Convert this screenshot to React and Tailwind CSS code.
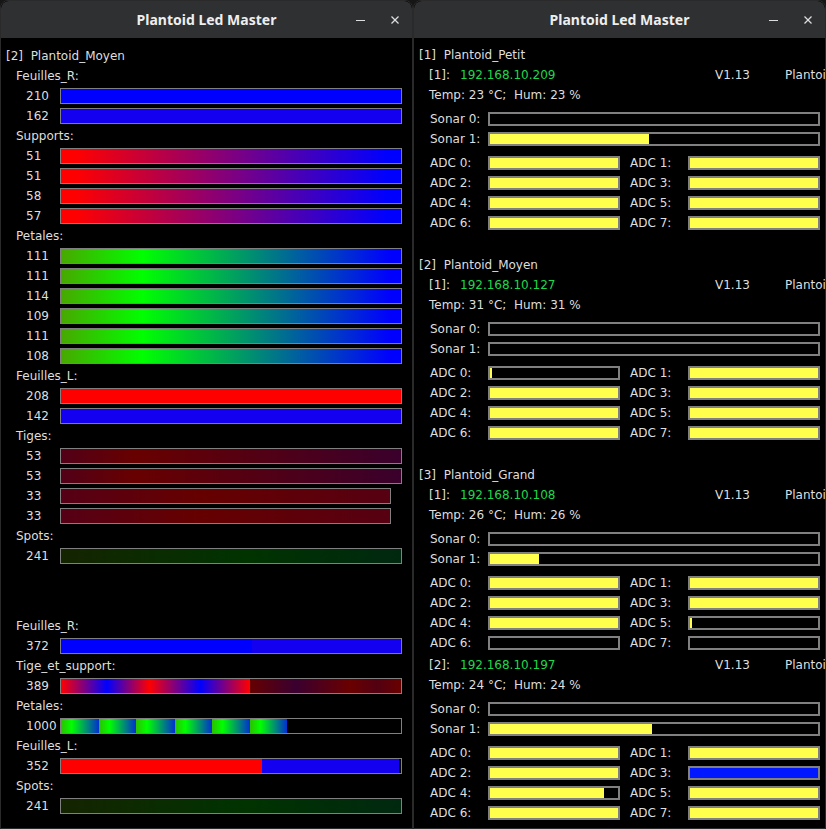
import React from "react";

const TitleBar = () => (
  <div className="relative h-[37px] shrink-0 bg-[#2e3032] rounded-t-[8px] flex items-center justify-center">
    <span className="font-['Noto_Sans',sans-serif] font-bold text-[14px] text-[#eeeeee]">Plantoid Led Master</span>
    <svg className="absolute left-[355px] top-[15px]" width="9" height="9" viewBox="0 0 9 9">
      <line x1="0" y1="4.5" x2="9" y2="4.5" stroke="#dddddd" strokeWidth="1" />
    </svg>
    <svg className="absolute left-[390px] top-[15px]" width="8" height="8" viewBox="0 0 8 8">
      <line x1="0.5" y1="0.5" x2="7.5" y2="7.5" stroke="#dddddd" strokeWidth="1.2" />
      <line x1="7.5" y1="0.5" x2="0.5" y2="7.5" stroke="#dddddd" strokeWidth="1.2" />
    </svg>
  </div>
);

const Label = ({ children }) => (
  <div className="h-[20px] flex items-center pl-[10px]">{children}</div>
);

const LRow = ({ n, w = "w-[342px]", bg = "", children }) => (
  <div className="h-[20px] flex items-center">
    <span className="ml-[20px] w-[34px] whitespace-nowrap">{n}</span>
    <div className={`h-[16px] border border-[#808080] bg-black flex overflow-hidden ${w}`}>
      <div className={`h-full w-full flex ${bg}`}>{children}</div>
    </div>
  </div>
);

const SUP = "bg-[linear-gradient(to_right,#ff0000_4%,#0000ff_96%)]";
const PET = "bg-[linear-gradient(to_right,#48a800_0%,#00ff00_24%,#0000ff_97%)]";
const TIG1 = "bg-[linear-gradient(to_right,#520018_0%,#680000_22%,#3a002c_100%)]";
const TIG2 = "bg-[linear-gradient(to_right,#560016_0%,#660000_42%,#560012_100%)]";
const SPOT = "bg-[linear-gradient(to_right,#142400_0%,#003300_55%,#002810_100%)]";
const SEG = "bg-[linear-gradient(to_right,#2cc000_0%,#00ff00_28%,#0030d0_100%)]";

const LeftWindow = () => (
  <div className="w-[413px] h-[829px] shrink-0 flex flex-col bg-black border border-[#2a2a2a] rounded-t-[8px] overflow-hidden">
    <TitleBar />
    <div className="pt-[8px] pl-[5px] text-[#dedede]">
      <div className="h-[20px] flex items-center whitespace-pre">[2]  Plantoid_Moyen</div>
      <Label>Feuilles_R:</Label>
      <LRow n="210" bg="bg-[#0000ff]" />
      <LRow n="162" bg="bg-[#1400f0]" />
      <Label>Supports:</Label>
      <LRow n="51" bg={SUP} />
      <LRow n="51" bg={SUP} />
      <LRow n="58" bg={SUP} />
      <LRow n="57" bg={SUP} />
      <Label>Petales:</Label>
      <LRow n="111" bg={PET} />
      <LRow n="111" bg={PET} />
      <LRow n="114" bg={PET} />
      <LRow n="109" bg={PET} />
      <LRow n="111" bg={PET} />
      <LRow n="108" bg={PET} />
      <Label>Feuilles_L:</Label>
      <LRow n="208" bg="bg-[#ff0000]" />
      <LRow n="142" bg="bg-[#1400f0]" />
      <Label>Tiges:</Label>
      <LRow n="53" bg={TIG1} />
      <LRow n="53" bg={TIG1} />
      <LRow n="33" w="w-[331px]" bg={TIG2} />
      <LRow n="33" w="w-[331px]" bg={TIG2} />
      <Label>Spots:</Label>
      <LRow n="241" bg={SPOT} />
      <div className="h-[50px]" />
      <Label>Feuilles_R:</Label>
      <LRow n="372">
        <div className="h-full w-[191px] bg-[#0000ff]" />
        <div className="h-full flex-1 bg-[#1400f0]" />
      </LRow>
      <Label>Tige_et_support:</Label>
      <LRow
        n="389"
        bg="bg-[linear-gradient(to_right,#ff0000_0%,#0000ff_13.5%,#ff0000_26%,#0000ff_41%,#ff0000_55.5%,#660000_55.5%,#3a0030_69%,#6a0000_85%,#520012_93%,#6a0000_100%)]"
      />
      <Label>Petales:</Label>
      <LRow n="1000">
        <div className={`h-full w-[38px] ${SEG}`} />
        <div className={`h-full w-[37px] ${SEG}`} />
        <div className={`h-full w-[39px] ${SEG}`} />
        <div className={`h-full w-[37px] ${SEG}`} />
        <div className={`h-full w-[38px] ${SEG}`} />
        <div className={`h-full w-[37px] ${SEG}`} />
      </LRow>
      <Label>Feuilles_L:</Label>
      <LRow n="352">
        <div className="h-full w-[201px] bg-[#ff0000]" />
        <div className="h-full w-[137px] bg-[#1400f0]" />
      </LRow>
      <Label>Spots:</Label>
      <LRow n="241" bg={SPOT} />
    </div>
  </div>
);

const RBar = ({ w, v, color = "bg-[#ffff4c]" }) => (
  <div className={`h-[14px] border-2 border-[#808080] bg-black shrink-0 ${w}`}>
    <div className={`h-full ${color}`} style={{ width: `${v * 100}%` }} />
  </div>
);

const Y = "bg-[#ffff4c]";
const B = "bg-[#0018ff]";

const Device = ({ idx, ip, name, t, s, adc }) => (
  <div className="pb-[2px]">
    <div className="h-[20px] flex items-center pl-[10px] whitespace-nowrap">
      <span className="w-[31px] shrink-0">[{idx}]:</span>
      <span className="w-[255px] shrink-0 text-[#1ed84c]">{ip}</span>
      <span className="w-[70px] shrink-0">V1.13</span>
      <span>{name}</span>
    </div>
    <div className="h-[20px] flex items-center pl-[10px] whitespace-pre">
      Temp: {t} °C;  Hum: {t} %
    </div>
    <div className="mt-[4px]">
      {s.map((v, i) => (
        <div key={i} className="h-[20px] flex items-center pl-[11px]">
          <span className="w-[58px] shrink-0">Sonar {i}:</span>
          <RBar w="w-[332px]" v={v} />
        </div>
      ))}
    </div>
    <div className="mt-[4px]">
      {[0, 1, 2, 3].map((r) => (
        <div key={r} className="h-[20px] flex items-center pl-[11px]">
          <span className="w-[58px] shrink-0">ADC {r * 2}:</span>
          <RBar w="w-[132px]" v={adc[r * 2][0]} color={adc[r * 2][1]} />
          <span className="w-[58px] shrink-0 ml-[10px]">ADC {r * 2 + 1}:</span>
          <RBar w="w-[132px]" v={adc[r * 2 + 1][0]} color={adc[r * 2 + 1][1]} />
        </div>
      ))}
    </div>
  </div>
);

const full = [1, Y];
const Section = ({ idx, name, children }) => (
  <div className="mb-[20px]">
    <div className="h-[20px] flex items-center whitespace-pre">[{idx}]  {name}</div>
    {children}
  </div>
);

const RightWindow = () => (
  <div className="w-[413px] h-[829px] shrink-0 flex flex-col bg-black border border-[#2a2a2a] rounded-t-[8px] overflow-hidden">
    <TitleBar />
    <div className="pt-[7px] pl-[5px] text-[#dedede] overflow-hidden">
      <Section idx={1} name="Plantoid_Petit">
        <Device idx={1} ip="192.168.10.209" name="Plantoid_Petit" t={23} s={[0, 0.485]}
          adc={[full, full, full, full, full, full, full, full]} />
      </Section>
      <Section idx={2} name="Plantoid_Moyen">
        <Device idx={1} ip="192.168.10.127" name="Plantoid_Moyen" t={31} s={[0, 0]}
          adc={[[0.012, Y], full, full, full, full, full, full, full]} />
      </Section>
      <Section idx={3} name="Plantoid_Grand">
        <Device idx={1} ip="192.168.10.108" name="Plantoid_Grand" t={26} s={[0, 0.15]}
          adc={[full, full, full, full, full, [0.012, Y], [0, Y], [0, Y]]} />
        <Device idx={2} ip="192.168.10.197" name="Plantoid_Grand" t={24} s={[0, 0.494]}
          adc={[full, full, full, [1, B], [0.89, Y], full, full, full]} />
      </Section>
    </div>
  </div>
);

export default function App() {
  return (
    <div className="w-[826px] h-[829px] bg-[#161616] flex gap-0 overflow-hidden font-['DejaVu_Sans',sans-serif] text-[12px]">
      <LeftWindow />
      <RightWindow />
    </div>
  );
}
